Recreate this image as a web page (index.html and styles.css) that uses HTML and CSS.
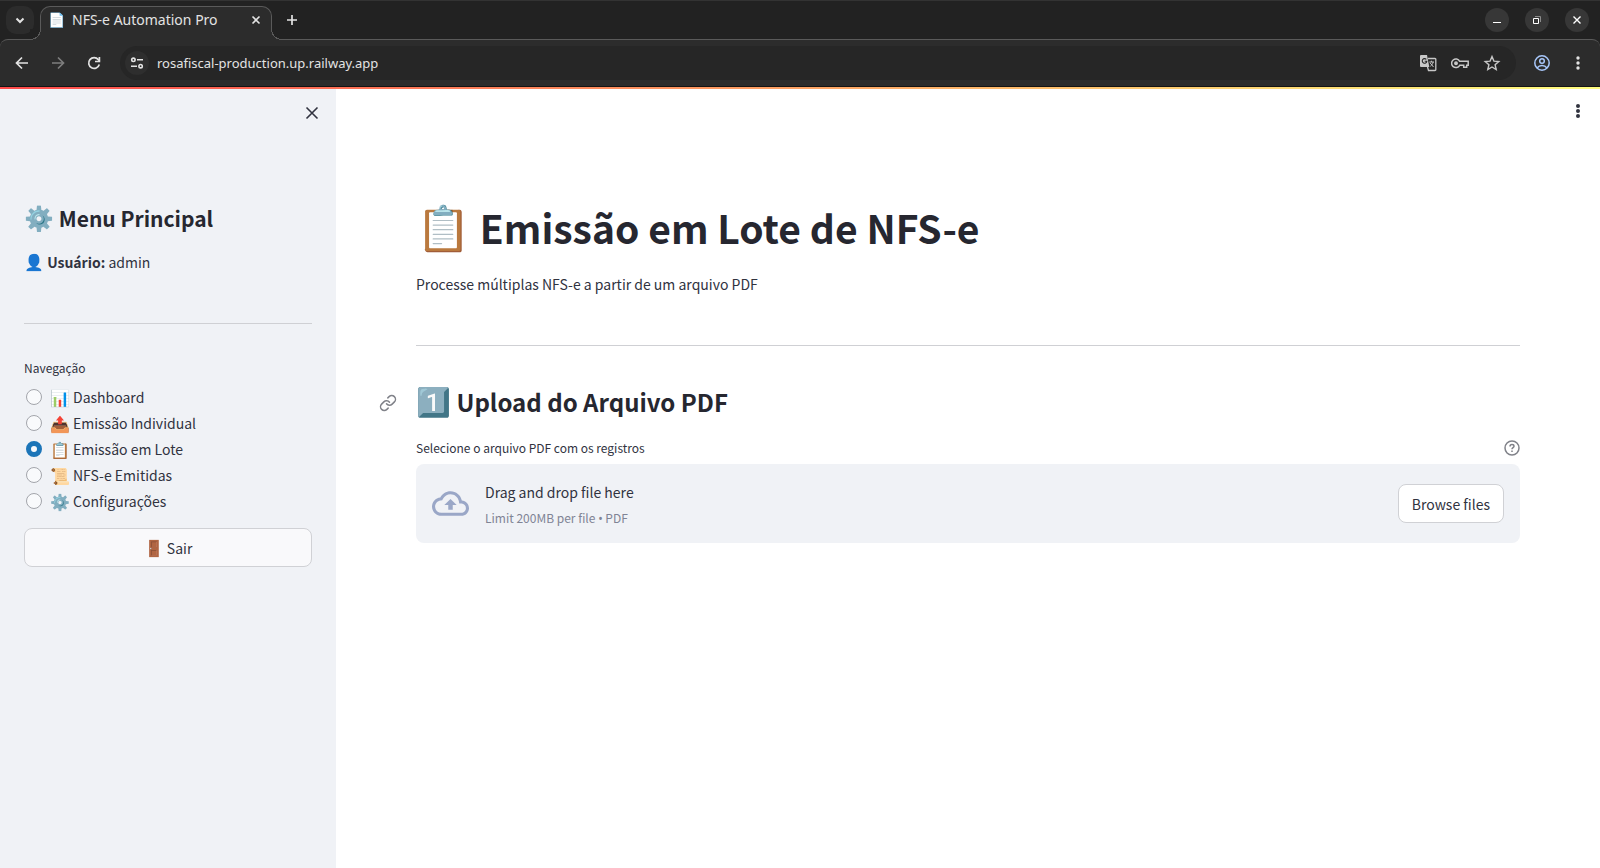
FILE: index.html
```html
<!DOCTYPE html>
<html lang="pt-BR">
<head>
    <meta charset="UTF-8">
    <meta name="viewport" content="width=device-width, initial-scale=1.0">
    <title>NFS-e Automation Pro</title>
    <link rel="stylesheet" href="styles.css">
</head>
<body>
    <header class="browser">
        <div class="tab-strip">
            <button class="tab-search" aria-label="Search tabs">
                <svg width="10" height="7" viewBox="0 0 10 7"><path d="M1.5 1.5 5 5l3.500-3.500" fill="none" stroke="currentColor" stroke-width="2"/></svg>
            </button>
            <div class="tab">
                <span class="favicon">📄</span>
                <span class="tab-title">NFS-e Automation Pro</span>
                <button class="tab-close" aria-label="Close tab">
                    <svg width="10" height="10" viewBox="0 0 10 10"><path d="M1.500 1.500l7 7M8.500 1.500l-7 7" stroke="currentColor" stroke-width="1.600"/></svg>
                </button>
            </div>
            <button class="new-tab" aria-label="New tab">
                <svg width="12" height="12" viewBox="0 0 12 12"><path d="M6 1v10M1 6h10" stroke="currentColor" stroke-width="1.700"/></svg>
            </button>
            <div class="window-buttons">
                <button aria-label="Minimize"><svg width="10" height="10" viewBox="0 0 10 10"><path d="M1 7.500h8" stroke="currentColor"/></svg></button>
                <button aria-label="Restore"><svg width="10" height="10" viewBox="0 0 10 10"><path d="M1.500 3.500h5v5h-5z" fill="none" stroke="currentColor"/><path d="M3 1.500h5.500V7" fill="none" stroke="#8c8c8c"/></svg></button>
                <button aria-label="Close"><svg width="10" height="10" viewBox="0 0 10 10"><path d="M1.500 1.500l7 7M8.500 1.500l-7 7" stroke="currentColor" stroke-width="1.400"/></svg></button>
            </div>
        </div>
        <div class="toolbar">
            <button class="tool" aria-label="Back"><svg width="14" height="14" viewBox="0 0 14 14"><path d="M13 7H2M7 1.500 1.500 7 7 12.500" fill="none" stroke="currentColor" stroke-width="1.700"/></svg></button>
            <button class="tool dim" aria-label="Forward"><svg width="14" height="14" viewBox="0 0 14 14"><path d="M1 7h11M7 1.500 12.500 7 7 12.500" fill="none" stroke="currentColor" stroke-width="1.700"/></svg></button>
            <button class="tool" aria-label="Reload"><svg width="14" height="14" viewBox="0 0 14 14"><path d="M12.300 8.500A5.400 5.400 0 1 1 11.300 3.600L12.600 5" fill="none" stroke="currentColor" stroke-width="1.700"/><path d="M12.400 1v4.500H8" fill="none" stroke="currentColor" stroke-width="1.700"/></svg></button>
            <div class="omnibox">
                <button class="site-info" aria-label="Site information"><svg width="14" height="14" viewBox="0 0 14 14" fill="none" stroke="currentColor" stroke-width="1.600"><circle cx="3.400" cy="3.800" r="1.700"/><path d="M7 3.800h6M1 10.200h6"/><circle cx="10.600" cy="10.200" r="1.700"/></svg></button>
                <input class="url" type="text" value="rosafiscal-production.up.railway.app" aria-label="Address">
                <button class="page-action" aria-label="Translate"><svg width="18" height="18" viewBox="0 0 18 18"><path d="M2 1h6l2.300 12H2a1 1 0 0 1-1-1V2a1 1 0 0 1 1-1z" fill="currentColor"/><path d="M9 4.500h7a.8.8 0 0 1 .8.8v10.400a.8.8 0 0 1-.8.8H9.500L8.500 13" fill="none" stroke="currentColor" stroke-width="1.300"/><path d="M10.300 8h4.700M12.400 6.700V8M14.200 8c-.4 1.800-1.500 3.200-2.800 4.300M11.200 9l3.300 4" fill="none" stroke="currentColor"/><path d="M7.300 5.400a2.300 2.300 0 1 0 .5 1.900H5.700" fill="none" stroke="#262626" stroke-width="1.100"/></svg></button>
                <button class="page-action" aria-label="Passwords"><svg width="18" height="18" viewBox="0 0 18 18" fill="none" stroke="currentColor" stroke-width="1.500"><path d="M8.700 7.300h8.500v4h-1.500v2h-3v-2h-4A4.300 4.300 0 1 1 8.700 7.300z"/><circle cx="5" cy="9.300" r="1.200" fill="currentColor"/></svg></button>
                <button class="page-action" aria-label="Bookmark"><svg width="18" height="18" viewBox="0 0 18 18"><path d="M9 2.600l1.900 4.500 4.900.4-3.700 3.200 1.100 4.800L9 13l-4.200 2.500 1.100-4.800-3.700-3.200 4.900-.4z" fill="none" stroke="currentColor" stroke-width="1.400"/></svg></button>
            </div>
            <button class="tool profile" aria-label="Profile"><svg width="18" height="18" viewBox="0 0 18 18" fill="none" stroke="currentColor" stroke-width="1.500"><circle cx="9" cy="9" r="7.200"/><circle cx="9" cy="7" r="2.300"/><path d="M4 14c1.300-1.600 3-2.400 5-2.400s3.700.8 5 2.400"/></svg></button>
            <button class="tool" aria-label="Browser menu"><svg width="4" height="16" viewBox="0 0 4 16" fill="currentColor"><circle cx="2" cy="3" r="1.700"/><circle cx="2" cy="8" r="1.700"/><circle cx="2" cy="13" r="1.700"/></svg></button>
        </div>
    </header>

    <div class="decoration"></div>

    <div class="app">
        <aside class="sidebar">
            <div class="sidebar-header">
                <button class="icon-button" aria-label="Close sidebar"><svg width="14" height="14" viewBox="0 0 14 14"><path d="M1.500 1.500l11 11M12.500 1.500l-11 11" stroke="currentColor" stroke-width="1.600"/></svg></button>
            </div>
            <h2><span class="emoji">⚙️</span> Menu Principal</h2>
            <p class="user"><span class="emoji">👤</span> <strong>Usuário:</strong> admin</p>
            <hr>
            <fieldset class="nav">
                <legend>Navegação</legend>
                <label><input type="radio" name="page"><span class="emoji">📊</span> Dashboard</label>
                <label><input type="radio" name="page"><span class="emoji">📤</span> Emissão Individual</label>
                <label><input type="radio" name="page" checked><span class="emoji">📋</span> Emissão em Lote</label>
                <label><input type="radio" name="page"><span class="emoji">📜</span> NFS-e Emitidas</label>
                <label><input type="radio" name="page"><span class="emoji">⚙️</span> Configurações</label>
            </fieldset>
            <button class="button logout"><span class="emoji">🚪</span> Sair</button>
        </aside>

        <main class="main">
            <div class="main-header">
                <button class="icon-button" aria-label="Main menu"><svg width="4" height="16" viewBox="0 0 4 16" fill="currentColor"><circle cx="2" cy="3" r="2"/><circle cx="2" cy="8" r="2"/><circle cx="2" cy="13" r="2"/></svg></button>
            </div>
            <div class="content">
                <h1><span class="emoji">📋</span> Emissão em Lote de NFS-e</h1>
                <p>Processe múltiplas NFS-e a partir de um arquivo PDF</p>
                <hr>
                <h2>
                    <a class="anchor" href="#upload" aria-label="Link to heading"><svg width="18" height="18" viewBox="0 0 24 24" fill="none" stroke="currentColor" stroke-width="2" stroke-linecap="round" stroke-linejoin="round"><path d="M10 13a5 5 0 0 0 7.540.540l3-3a5 5 0 0 0-7.070-7.070l-1.720 1.710"/><path d="M14 11a5 5 0 0 0-7.540-.540l-3 3a5 5 0 0 0 7.070 7.070l1.710-1.710"/></svg></a>
                    <span class="emoji">1️⃣</span> <span id="upload">Upload do Arquivo PDF</span>
                </h2>
                <div class="field-label">
                    <label for="file">Selecione o arquivo PDF com os registros</label>
                    <svg width="16" height="16" viewBox="0 0 16 16" fill="none" stroke="currentColor" stroke-width="1.500"><circle cx="8" cy="8" r="7"/><path d="M6 6.400C6 5.200 6.900 4.500 8 4.500s2 .7 2 1.700c0 1.300-2 1.500-2 3"/><path d="M8 10.500v1.500"/></svg>
                </div>
                <div class="dropzone">
                    <input type="file" id="file" accept=".pdf" hidden>
                    <svg class="cloud" width="37" height="37" viewBox="0 0 24 24" fill="currentColor"><path d="M19.350 10.040C18.670 6.590 15.640 4 12 4 9.110 4 6.600 5.640 5.350 8.040 2.340 8.360 0 10.910 0 14c0 3.310 2.690 6 6 6h13c2.760 0 5-2.240 5-5 0-2.640-2.050-4.780-4.650-4.960zM19 18H6c-2.210 0-4-1.790-4-4 0-2.050 1.530-3.760 3.560-3.970l1.070-.110.500-.950C8.080 7.140 9.940 6 12 6c2.620 0 4.880 1.860 5.390 4.430l.300 1.500 1.530.110c1.560.100 2.780 1.410 2.780 2.960 0 1.650-1.350 3-3 3zM8 13h2.550v3h2.900v-3H16l-4-4z"/></svg>
                    <div class="drop-text">
                        <span>Drag and drop file here</span>
                        <small>Limit 200MB per file <span class="dot">•</span> PDF</small>
                    </div>
                    <button class="button browse" onclick="document.getElementById('file').click()">Browse files</button>
                </div>
            </div>
        </main>
    </div>
</body>
</html>
```

FILE: styles.css
```css
* {
    box-sizing: border-box;
}
body {
    margin: 0;
    min-height: 100vh;
    display: flex;
    flex-direction: column;
    font-family: "Noto Sans CJK SC", "Liberation Sans", sans-serif;
    font-size: 14px;
    line-height: 24px;
    color: #31333f;
    background: #ffffff;
}
button {
    font: inherit;
    color: inherit;
    background: none;
    border: 0;
    padding: 0;
    cursor: pointer;
}
svg {
    display: block;
    flex-shrink: 0;
}
.emoji {
    font-size: 16px;
    line-height: 1;
}

/* browser */
.browser {
    background: #222222;
    color: #e3e3e3;
    border-top: 1px solid #333333;
    border-bottom: 1px solid #151515;
    font-family: "Noto Sans", sans-serif;
}
.tab-strip {
    display: flex;
    align-items: center;
    height: 38px;
    padding: 0 11px 0 6px;
}
.tab-search {
    display: grid;
    place-items: center;
    width: 28px;
    height: 28px;
    border-radius: 10px;
    background: #2c2c2c;
}
.tab {
    position: relative;
    z-index: 1;
    align-self: flex-end;
    display: flex;
    align-items: center;
    gap: 8px;
    width: 232px;
    height: 34px;
    margin: 0 0 -1px 6px;
    padding: 0 10px 7px 7px;
    background: #2c2c2c;
    border: 1px solid #5a5a5a;
    border-bottom: 0;
    border-radius: 10px 10px 0 0;
}
.tab::before,
.tab::after {
    content: "";
    position: absolute;
    bottom: 0;
    width: 11px;
    height: 11px;
}
.tab::before {
    left: -11px;
    background: radial-gradient(circle at 0 0, #222222 10px, #5a5a5a 10px, #5a5a5a 11px, #2c2c2c 11px);
}
.tab::after {
    right: -11px;
    background: radial-gradient(circle at 100% 0, #222222 10px, #5a5a5a 10px, #5a5a5a 11px, #2c2c2c 11px);
}
.favicon {
    width: 16px;
    font-size: 14px;
}
.tab-title {
    flex: 1;
    font-size: 14px;
    white-space: nowrap;
}
.tab-close,
.new-tab {
    display: grid;
    place-items: center;
    width: 10px;
    height: 24px;
}
.new-tab {
    width: 24px;
    margin-left: 8px;
}
.window-buttons {
    display: flex;
    gap: 16px;
    margin-left: auto;
}
.window-buttons button {
    display: grid;
    place-items: center;
    width: 24px;
    height: 24px;
    border-radius: 50%;
    background: #373737;
    color: #ffffff;
}
.toolbar {
    display: flex;
    align-items: center;
    gap: 12px;
    height: 47px;
    padding: 0 10px;
    background: #2c2c2c;
    border: 1px solid #5a5a5a;
    border-width: 1px 0 0;
    border-radius: 8px 8px 0 0;
}
.tool {
    display: grid;
    place-items: center;
    width: 24px;
    height: 24px;
}
.dim {
    color: #7d7d7d;
}
.profile {
    color: #a8c7fa;
    margin-left: 2px;
}
.omnibox {
    flex: 1;
    display: flex;
    align-items: center;
    gap: 14px;
    height: 34px;
    margin-left: 2px;
    padding: 0 15px 0 5px;
    border-radius: 17px;
    background: #262626;
}
.site-info {
    display: grid;
    place-items: center;
    width: 24px;
    height: 24px;
    border-radius: 50%;
    background: #2e2e2e;
}
.url {
    flex: 1;
    min-width: 0;
    margin-left: -6px;
    padding: 0;
    border: 0;
    outline: 0;
    background: none;
    color: #e3e3e3;
    font-family: inherit;
    font-size: 13px;
}
.page-action {
    color: #c7c7c7;
}

/* app */
.decoration {
    height: 2px;
    background: linear-gradient(90deg, #ff4b4b, #fffd80);
}
.app {
    flex: 1;
    display: flex;
}
.icon-button {
    display: grid;
    place-items: center;
    width: 24px;
    height: 24px;
}
h1,
h2,
p {
    margin: 0;
}
h1,
h2 {
    color: #262730;
}
hr {
    margin: 0;
    border: 0;
    border-top: 1px solid #cfd0d4;
}
.button {
    height: 39px;
    padding: 0 13px;
    border: 1px solid #d0d1d5;
    border-radius: 8px;
}

.sidebar {
    width: 336px;
    padding: 0 24px;
    background: #f0f2f6;
}
.sidebar-header {
    display: flex;
    justify-content: flex-end;
    height: 111px;
    margin-right: -12px;
    padding-top: 12px;
}
.sidebar h2 {
    font-size: 21px;
    line-height: 36px;
}
.sidebar h2 .emoji {
    font-size: 24px;
}
.user {
    margin: 14px 0 49px;
}
.nav {
    margin: 32px 0 14px;
    padding: 0;
    border: 0;
}
.nav legend {
    padding: 0 0 4px;
    font-size: 12px;
}
.nav label {
    display: flex;
    align-items: center;
    gap: 3px;
    height: 26px;
}
.nav input {
    appearance: none;
    width: 16px;
    height: 16px;
    margin: 0 5px 0 2px;
    border: 1px solid #a3a5ab;
    border-radius: 50%;
    background: #f9fafc;
}
.nav input:checked {
    border: 5px solid #1c75b8;
}
.logout {
    width: 100%;
    background: #f9f9fb;
}

.main {
    flex: 1;
    min-width: 0;
}
.main-header {
    display: flex;
    justify-content: flex-end;
    height: 93px;
    padding: 10px 10px 0;
}
.content {
    padding: 0 80px;
}
.content h1 {
    font-size: 39px;
    line-height: 90px;
}
.content h1 .emoji {
    font-size: 44px;
}
.content hr {
    margin: 49px 0 29px;
}
.content h2 {
    position: relative;
    font-size: 24px;
    line-height: 54px;
}
.content h2 .emoji {
    font-size: 28px;
}
.anchor {
    position: absolute;
    left: -37px;
    top: 19px;
    color: #808289;
}
.field-label {
    display: flex;
    align-items: center;
    justify-content: space-between;
    margin-top: 7px;
    height: 24px;
    font-size: 12px;
}
.field-label svg {
    color: #808289;
}
.dropzone {
    display: flex;
    align-items: center;
    margin-top: 4px;
    padding: 12px 16px;
    border-radius: 8px;
    background: #f0f2f6;
}
.cloud {
    color: #9aa7c7;
    margin-right: 16px;
}
.drop-text {
    display: flex;
    flex-direction: column;
    flex: 1;
    padding-top: 4px;
    line-height: 25px;
}
.drop-text small {
    font-size: 12px;
    color: #808495;
}
.dot {
    font-family: "Noto Sans", sans-serif;
}
.browse {
    background: #ffffff;
}
```
